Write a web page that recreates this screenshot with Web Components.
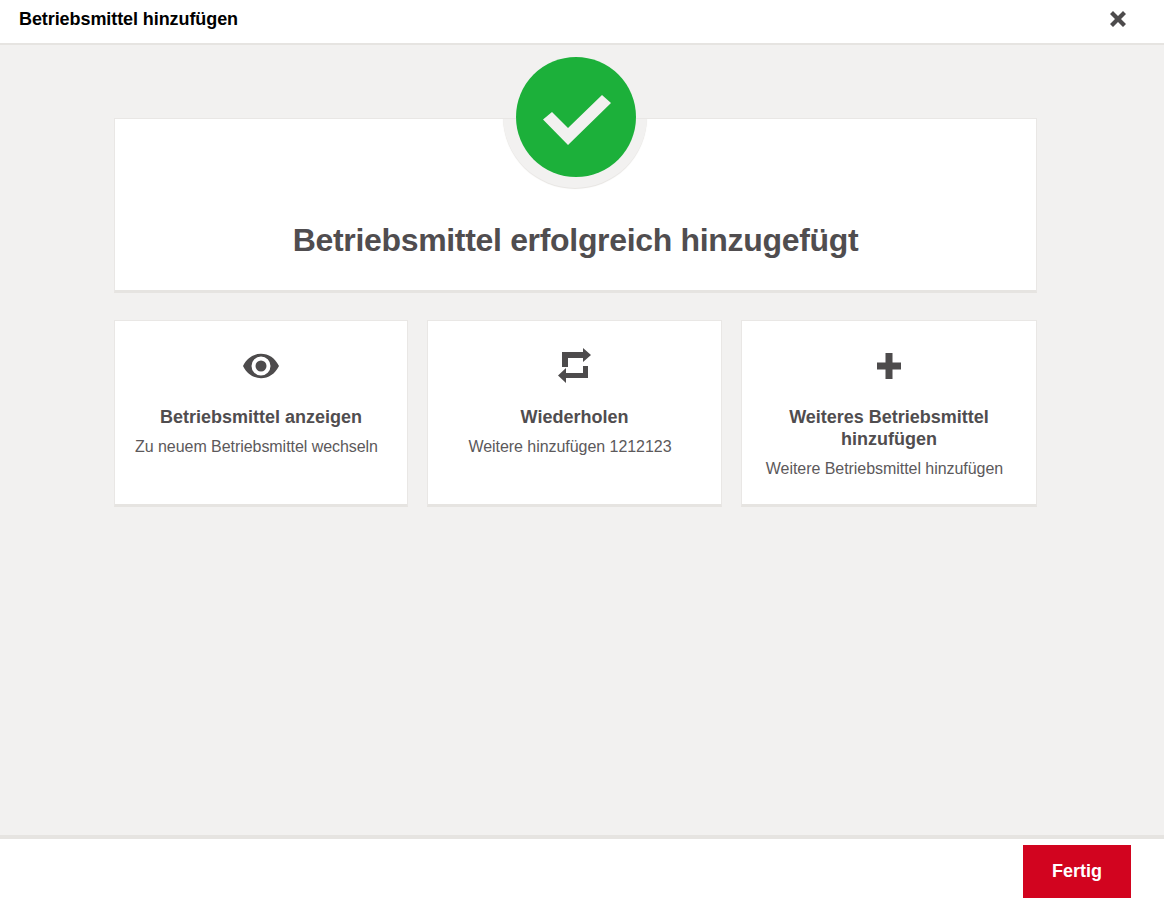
<!DOCTYPE html>
<html lang="de"><head><meta charset="utf-8"><title>Betriebsmittel hinzufügen</title>
<style>
html,body{margin:0;height:100%;background:#fff;font-family:"Liberation Sans",Arial,sans-serif;color:#504d4f}
</style></head><body>
<wizard-dialog heading="Betriebsmittel hinzufügen">
  <success-card heading="Betriebsmittel erfolgreich hinzugefügt"></success-card>
  <action-grid>
    <action-card icon="eye" heading="Betriebsmittel anzeigen" text="Zu neuem Betriebsmittel wechseln"></action-card>
    <action-card icon="repeat" heading="Wiederholen" text="Weitere hinzufügen 1212123"></action-card>
    <action-card icon="plus" heading="Weiteres Betriebsmittel hinzufügen" text="Weitere Betriebsmittel hinzufügen"></action-card>
  </action-grid>
</wizard-dialog>
<script>
const INK='#4d4b4c';
const ICONS={
 eye:`<svg width="36" height="26" viewBox="0 0 36 26"><path fill="${INK}" fill-rule="evenodd" d="M0 13C4 5 10.500 .8 18 .8S32 5 36 13c-4 8-10.500 12.200-18 12.200S4 21 0 13ZM18 3.500a9.500 9.500 0 1 0 0 19 9.500 9.500 0 0 0 0-19Z"/><circle cx="18" cy="13" r="5.500" fill="${INK}"/></svg>`,
 repeat:`<svg style="margin-left:1px" width="34" height="38" viewBox="0 0 34 38"><path fill="${INK}" d="M4 5H25V1L33 8 25 15V11H10V20H4ZM30 19H25V26H8V21L0 28.500 8 36V31H30Z"/></svg>`,
 plus:`<svg width="24" height="26" viewBox="0 0 24 26"><path fill="${INK}" d="M8.500 0h7v9.500H24v7h-8.500V26h-7v-9.500H0v-7h8.500Z"/></svg>`
};
function def(name,cls){customElements.define(name,cls)}
def('wizard-dialog',class extends HTMLElement{
 connectedCallback(){const s=this.attachShadow({mode:'open'});
  s.innerHTML=`<style>
  :host{display:flex;flex-direction:column;height:100vh;box-sizing:border-box;overflow:hidden}
  header{flex:none;height:43px;border-bottom:2px solid #e6e4e1;background:#fff;display:flex;align-items:center;justify-content:space-between;padding:0 38px 0 19px}
  h1{margin:0;font-size:18px;letter-spacing:-.08px;font-weight:700;color:#000;position:relative;top:-2px}
  .close{display:flex;position:relative;top:-3px}
  main{flex:1;background:#f2f1f0;padding:73px 127px 0 114px;display:flex;flex-direction:column;gap:27px;min-height:0}
  footer{flex:none;box-sizing:border-box;border-top:4px solid #e6e4e1;height:65px;background:#fff;display:flex;justify-content:flex-end;padding:6px 33px 0 0}
  button.done{width:108px;height:53px;border:0;background:#d2041f;color:#fff;font:700 18px "Liberation Sans",Arial,sans-serif;padding:0}
  </style>
  <header><h1>${this.getAttribute('heading')}</h1><span class="close"><svg width="16" height="16" viewBox="0 0 16 16"><path fill="${INK}" d="M3 0 8 5l5-5 3 3-5 5 5 5-3 3-5-5-5 5-3-3 5-5-5-5Z"/></svg></span></header>
  <main><slot></slot></main>
  <footer><button class="done">Fertig</button></footer>`;}
});
def('success-card',class extends HTMLElement{
 connectedCallback(){const s=this.attachShadow({mode:'open'});
  s.innerHTML=`<style>
  :host{display:block;position:relative;background:#fff;box-sizing:border-box;height:175px;border:1px solid #e9e7e5;border-bottom:3px solid #e6e4e1;text-align:center}
  .halo{position:absolute;left:388px;top:-75px;width:144px;height:144px;border-radius:50%;background:#f2f1f0;box-shadow:0 1px 1px #e6e4e1;clip-path:inset(75px -4px -4px -4px)}
  .badge{position:absolute;left:401px;top:-62px;width:120px;height:120px;border-radius:50%;background:#1cb03a;display:flex}
  h2{margin:0;padding-top:101px;font-size:32px;letter-spacing:-.32px;line-height:40px;font-weight:700;color:#504d4f}
  </style>
  <div class="halo"></div>
  <div class="badge"><svg width="120" height="120" viewBox="0 0 120 120"><path fill="#f2f1f0" d="M27 62.500l9-7.500 16 16 34-33 9 8-43 42Z"/></svg></div>
  <h2>${this.getAttribute('heading')}</h2>`;}
});
def('action-grid',class extends HTMLElement{
 connectedCallback(){const s=this.attachShadow({mode:'open'});
  s.innerHTML=`<style>:host{display:grid;grid-template-columns:294px 295px 296px;gap:19px;width:923px;margin-right:0}</style><slot></slot>`;}
});
def('action-card',class extends HTMLElement{
 connectedCallback(){const s=this.attachShadow({mode:'open'});
  s.innerHTML=`<style>
  :host{display:flex;flex-direction:column;align-items:center;box-sizing:border-box;height:187px;background:#fff;border:1px solid #e9e7e5;border-bottom:3px solid #e6e4e1;text-align:center;padding:0 20px}
  .icon{height:85px;display:flex;align-items:center;justify-content:center;flex:none;padding-top:5px;box-sizing:border-box}
  svg{display:block}
  h3{margin:0;font-size:18px;line-height:22px;font-weight:700;color:#504d4f}
  p{margin:9px 0 0;padding-right:9px;font-size:16px;letter-spacing:-.05px;line-height:20px;color:#5c595b}
  </style>
  <div class="icon">${ICONS[this.getAttribute('icon')]}</div>
  <h3>${this.getAttribute('heading')}</h3>
  <p>${this.getAttribute('text')}</p>`;}
});
</script>
</body></html>
